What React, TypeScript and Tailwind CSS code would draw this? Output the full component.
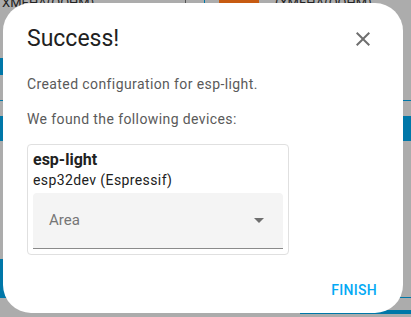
export default function App() {
  return (
    <div className="relative w-[411px] h-[317px] overflow-hidden bg-[#acacac] font-['Roboto',sans-serif]">
      {/* dimmed page behind the dialog */}
      <div className="flex flex-col">
        <div className="flex h-[10px] items-start text-[13px] leading-[10px] text-[#222] -mt-[2px]">
          <span className="w-[185px] pl-[2px]">XMEHA(OOHM)</span>
          <span className="w-px h-[10px] bg-[#555]" />
          <span className="w-[18px]" />
          <span className="w-px h-[10px] bg-[#0077a8]" />
          <span className="w-[14px]" />
          <span className="w-[40px] h-[8px] bg-[#c75b12]" />
          <span className="pl-[16px]">(XMEHA(OOHM)</span>
        </div>
        <div className="h-[50px]" />
        <div className="h-[17px] w-[4px] bg-[#0077a8]" />
        <div className="h-[25px]" />
        <div className="h-px bg-[#0077a8]" />
        <div className="h-[15px]" />
        <div className="h-[25px] bg-[#0077a8]" />
        <div className="h-[118px]" />
        <div className="h-[38px] w-[6px] bg-[#0077a8]" />
        <div className="h-px bg-[#0077a8]" />
        <div className="h-[12px]" />
        <div className="flex h-[4px]">
          <div className="w-[300px]" />
          <div className="flex-1 bg-[#0077a8]" />
        </div>
      </div>

      {/* dialog */}
      <div className="absolute left-[3px] top-[3px] w-[400px] h-[310px] rounded-[28px] bg-white flex flex-col px-6">
        <div className="flex items-center justify-between pt-[22px]">
          <h2 className="text-[23px] leading-[28px] text-[#212121]">Success!</h2>
          <button className="w-6 h-6 flex items-center justify-center text-[#6f6f6f] mr-[4px]">
            <svg viewBox="0 0 24 24" className="w-6 h-6" fill="currentColor">
              <path d="M19,6.41L17.59,5L12,10.59L6.41,5L5,6.41L10.59,12L5,17.59L6.41,19L12,13.41L17.59,19L19,17.59L13.41,12L19,6.41Z" />
            </svg>
          </button>
        </div>
        <p className="mt-[21px] text-[14px] leading-[20px] text-[#5a5a5a] tracking-[0.4px]">
          Created configuration for esp-light.
        </p>
        <p className="mt-[15px] text-[14px] leading-[20px] text-[#5a5a5a] tracking-[0.4px]">
          We found the following devices:
        </p>
        <div className="mt-[15px] w-[262px] border border-[#e0e0e0] rounded-[4px] px-[5px] pt-[5px] pb-[5px]">
          <div className="text-[16px] leading-[20px] font-bold text-[#212121]">esp-light</div>
          <div className="text-[14px] leading-[20px] tracking-[0.4px] text-[#212121]">esp32dev (Espressif)</div>
          <div className="mt-[3px] h-[56px] bg-[#f4f4f4] rounded-t-[4px] border-b border-[#8a8a8a] flex items-center justify-between pl-[16px] pr-[19px]">
            <span className="text-[15px] text-[#767676]">Area</span>
            <svg viewBox="0 0 10 5" className="w-[10px] h-[5px]" fill="#6f6f6f">
              <path d="M0 0 L10 0 L5 5 Z" />
            </svg>
          </div>
        </div>
        <div className="flex justify-end mt-[27px]">
          <button className="text-[14px] leading-[16px] font-medium tracking-[0.3px] text-[#03a9f4] mr-[2px]">FINISH</button>
        </div>
      </div>
    </div>
  );
}
